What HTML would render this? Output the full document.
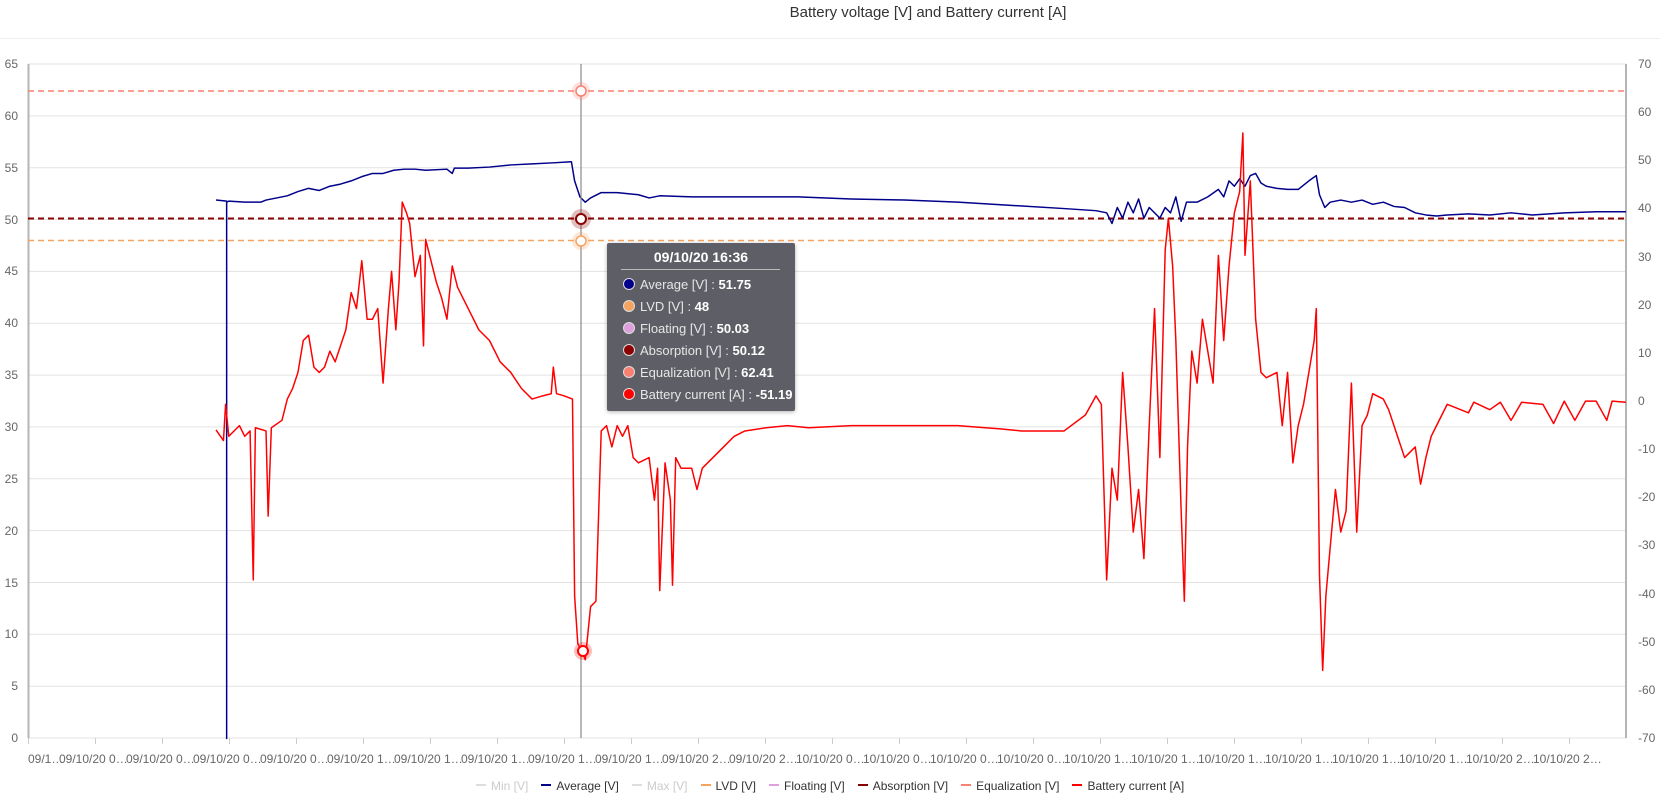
<!DOCTYPE html>
<html><head><meta charset="utf-8">
<style>
html,body{margin:0;padding:0;background:#fff;width:1660px;height:798px;overflow:hidden;font-family:"Liberation Sans",sans-serif;}
.title{position:absolute;top:4px;left:0;width:1856px;text-align:center;font-size:15px;color:#333;}
.hdr{position:absolute;top:38px;left:0;width:1660px;height:1px;background:#eee;}
.tt{position:absolute;left:607px;top:243px;width:188px;height:168px;background:rgba(80,81,89,0.92);border-radius:2px;box-shadow:0 1px 4px rgba(0,0,0,.3);color:#fff;font-size:13px;}
.tt .h{text-align:center;font-weight:bold;font-size:14px;margin-top:6px;}
.tt .ln{margin:4px 15px 0 14px;height:1px;background:#bbb;}
.tt .r{position:absolute;left:16px;white-space:nowrap;color:#e6e6e6;}
.tt .r b{color:#fff;}
.tt .d{display:inline-block;width:10px;height:10px;border-radius:50%;border:1px solid #ddd;margin-right:5px;vertical-align:-1px;}
.leg{position:absolute;top:779px;left:476px;font-size:12px;color:#333;white-space:nowrap;}
.leg span{margin-right:13px;}
.leg i{display:inline-block;width:10px;height:2px;vertical-align:4px;margin-right:5px;}
</style></head><body>
<div class="title">Battery voltage [V] and Battery current [A]</div>
<div class="hdr"></div>
<svg width="1660" height="798" style="position:absolute;left:0;top:0" xmlns="http://www.w3.org/2000/svg" font-family="Liberation Sans, sans-serif">
<g stroke="#e3e3e3" stroke-width="1">
<line x1="28" x2="1626" y1="64" y2="64"/><line x1="28" x2="1626" y1="115.85" y2="115.85"/><line x1="28" x2="1626" y1="167.7" y2="167.7"/><line x1="28" x2="1626" y1="219.5" y2="219.5"/><line x1="28" x2="1626" y1="271.4" y2="271.4"/><line x1="28" x2="1626" y1="323.2" y2="323.2"/><line x1="28" x2="1626" y1="375.1" y2="375.1"/><line x1="28" x2="1626" y1="426.9" y2="426.9"/><line x1="28" x2="1626" y1="478.8" y2="478.8"/><line x1="28" x2="1626" y1="530.6" y2="530.6"/><line x1="28" x2="1626" y1="582.5" y2="582.5"/><line x1="28" x2="1626" y1="634.3" y2="634.3"/><line x1="28" x2="1626" y1="686.2" y2="686.2"/><line x1="28" x2="1626" y1="738" y2="738"/>
</g>
<line x1="28.5" x2="28.5" y1="64" y2="738" stroke="#b5b5b5" stroke-width="2"/>
<line x1="1626" x2="1626" y1="64" y2="738" stroke="#b5b5b5" stroke-width="2"/>
<g font-size="12" fill="#666" text-anchor="end">
<text x="18" y="68">65</text><text x="18" y="120">60</text><text x="18" y="172">55</text><text x="18" y="224">50</text><text x="18" y="275">45</text><text x="18" y="327">40</text><text x="18" y="379">35</text><text x="18" y="431">30</text><text x="18" y="483">25</text><text x="18" y="535">20</text><text x="18" y="587">15</text><text x="18" y="638">10</text><text x="18" y="690">5</text><text x="18" y="742">0</text>
</g>
<g font-size="12" fill="#666">
<text x="1638" y="68">70</text><text x="1638" y="116">60</text><text x="1638" y="164">50</text><text x="1638" y="212">40</text><text x="1638" y="261">30</text><text x="1638" y="309">20</text><text x="1638" y="357">10</text><text x="1638" y="405">0</text><text x="1638" y="453">-10</text><text x="1638" y="501">-20</text><text x="1638" y="549">-30</text><text x="1638" y="598">-40</text><text x="1638" y="646">-50</text><text x="1638" y="694">-60</text><text x="1638" y="742">-70</text>
</g>
<line x1="28" x2="1626" y1="91" y2="91" stroke="#fa8072" stroke-width="1.5" stroke-dasharray="6,4"/>
<line x1="28" x2="1626" y1="218.5" y2="218.5" stroke="#8b0000" stroke-width="2" stroke-dasharray="6,4"/>
<line x1="28" x2="1626" y1="240.5" y2="240.5" stroke="#f4a460" stroke-width="1.5" stroke-dasharray="6,4"/>
<g transform="scale(1.0641)" fill="none" stroke-linejoin="round">
<polyline stroke="#00008b" stroke-width="1.4" points="203,188 213,189 213,694 213,190 215,189 230,190 245,190 250,188 260,186 270,184 280,180 290,177 300,179 310,175 320,173 330,170 340,166 350,163 360,163 370,160 380,159 390,159 400,160 420,159 425,163 427,158 440,158 460,157 480,155 500,154 520,153 537,152 540,170 545,185 550,190 555,186 565,181 580,181 600,183 610,186 620,184 650,185 700,185 750,185 800,187 850,188 900,190 950,193 1000,196 1030,198 1040,200 1045,210 1050,195 1055,205 1060,190 1065,200 1070,187 1075,205 1080,195 1090,205 1095,195 1100,200 1105,185 1110,208 1115,190 1125,190 1135,185 1145,178 1150,185 1155,170 1160,175 1165,168 1170,175 1175,165 1180,163 1185,172 1190,175 1200,177 1210,178 1220,178 1230,170 1237,165 1240,183 1245,195 1250,190 1260,188 1270,190 1280,188 1290,192 1300,190 1310,194 1320,195 1330,200 1340,202 1350,203 1360,202 1380,201 1400,202 1420,200 1440,202 1470,200 1500,199 1528,199"/>
<polyline stroke="#ff0000" stroke-width="1.4" points="203,404 210,414 212,380 215,410 225,400 230,410 235,405 238,545 240,402 250,405 252,485 255,402 265,395 270,375 275,365 280,350 285,320 290,315 295,345 300,350 305,345 310,330 315,340 325,310 330,275 335,290 340,245 345,300 350,300 355,290 360,360 365,290 368,255 372,310 375,265 378,190 382,200 385,210 390,260 395,240 398,325 400,225 405,245 410,265 415,280 420,300 425,250 430,270 440,290 450,310 460,320 470,340 480,350 490,365 500,375 510,372 518,370 520,345 523,370 530,372 538,375 540,560 543,605 547,612 550,620 555,570 560,565 565,405 570,400 575,420 580,400 585,410 590,400 595,430 600,435 610,430 615,470 618,440 620,555 625,435 630,470 632,550 635,430 640,440 650,440 655,460 660,440 670,430 680,420 690,410 700,405 720,402 740,400 760,402 800,400 850,400 900,400 940,403 960,405 1000,405 1020,390 1030,372 1035,380 1040,545 1045,440 1050,470 1055,350 1060,420 1065,500 1070,460 1075,525 1080,400 1085,290 1090,430 1095,235 1098,205 1102,250 1105,320 1110,480 1113,565 1116,420 1120,330 1125,360 1130,300 1140,360 1145,240 1150,320 1155,250 1160,200 1165,180 1168,125 1170,240 1175,170 1180,300 1185,350 1190,355 1200,350 1205,400 1210,350 1215,435 1220,400 1225,380 1230,350 1235,320 1237,290 1240,540 1243,630 1246,560 1250,515 1255,460 1260,500 1265,480 1270,360 1275,500 1280,400 1285,390 1290,370 1300,375 1305,385 1310,400 1320,430 1330,420 1335,455 1340,430 1345,410 1350,400 1360,380 1380,388 1385,378 1400,385 1410,378 1420,395 1430,378 1450,380 1460,398 1470,377 1480,395 1490,377 1500,377 1510,395 1515,377 1528,378"/>
</g>
<line x1="581" x2="581" y1="64" y2="738" stroke="#888" stroke-width="1.2"/>
<circle cx="581" cy="91" r="9" fill="#fa8072" opacity="0.25"/><circle cx="581" cy="91" r="5" fill="#fff" stroke="#fa8072" stroke-width="1.5"/>
<circle cx="581" cy="219" r="10" fill="#8b0000" opacity="0.25"/><circle cx="581" cy="219" r="5" fill="#fff" stroke="#8b0000" stroke-width="2"/>
<circle cx="581" cy="241" r="9" fill="#f4a460" opacity="0.25"/><circle cx="581" cy="241" r="5" fill="#fff" stroke="#f4a460" stroke-width="1.5"/>
<circle cx="583" cy="651" r="9" fill="#ff0000" opacity="0.25"/><circle cx="583" cy="651" r="5" fill="#fff" stroke="#ff0000" stroke-width="2"/>
</svg>
<div class="tt">
<div class="h">09/10/20 16:36</div><div class="ln"></div>
<div class="r" style="top:34px"><span class="d" style="background:#00008b"></span>Average [V] : <b>51.75</b></div>
<div class="r" style="top:56px"><span class="d" style="background:#f4a460"></span>LVD [V] : <b>48</b></div>
<div class="r" style="top:78px"><span class="d" style="background:#dda0dd"></span>Floating [V] : <b>50.03</b></div>
<div class="r" style="top:100px"><span class="d" style="background:#8b0000"></span>Absorption [V] : <b>50.12</b></div>
<div class="r" style="top:122px"><span class="d" style="background:#fa8072"></span>Equalization [V] : <b>62.41</b></div>
<div class="r" style="top:144px"><span class="d" style="background:#ff0000"></span>Battery current [A] : <b>-51.19</b></div>
</div>
<div class="leg">
<span style="color:#ccc"><i style="background:#ddd"></i>Min [V]</span><span><i style="background:#00008b"></i>Average [V]</span><span style="color:#ccc"><i style="background:#ddd"></i>Max [V]</span><span><i style="background:#f4a460"></i>LVD [V]</span><span><i style="background:#dda0dd"></i>Floating [V]</span><span><i style="background:#8b0000"></i>Absorption [V]</span><span><i style="background:#fa8072"></i>Equalization [V]</span><span><i style="background:#ff0000"></i>Battery current [A]</span>
</div>
<div style="position:absolute;top:752px;left:28px;height:16px;width:1600px;font-size:12px;color:#666;white-space:nowrap;overflow:hidden">
<span style="position:absolute;left:0">09/1…</span>
<span style="position:absolute;left:31px">09/10/20 0…</span><span style="position:absolute;left:98px">09/10/20 0…</span><span style="position:absolute;left:165px">09/10/20 0…</span><span style="position:absolute;left:232px">09/10/20 0…</span><span style="position:absolute;left:299px">09/10/20 1…</span><span style="position:absolute;left:366px">09/10/20 1…</span><span style="position:absolute;left:433px">09/10/20 1…</span><span style="position:absolute;left:500px">09/10/20 1…</span><span style="position:absolute;left:567px">09/10/20 1…</span><span style="position:absolute;left:634px">09/10/20 2…</span><span style="position:absolute;left:701px">09/10/20 2…</span><span style="position:absolute;left:768px">10/10/20 0…</span><span style="position:absolute;left:835px">10/10/20 0…</span><span style="position:absolute;left:902px">10/10/20 0…</span><span style="position:absolute;left:969px">10/10/20 0…</span><span style="position:absolute;left:1036px">10/10/20 1…</span><span style="position:absolute;left:1103px">10/10/20 1…</span><span style="position:absolute;left:1170px">10/10/20 1…</span><span style="position:absolute;left:1237px">10/10/20 1…</span><span style="position:absolute;left:1304px">10/10/20 1…</span><span style="position:absolute;left:1371px">10/10/20 1…</span><span style="position:absolute;left:1438px">10/10/20 2…</span><span style="position:absolute;left:1505px">10/10/20 2…</span>
</div>
<svg width="1660" height="20" style="position:absolute;left:0;top:738px">
<g stroke="#ccc" stroke-width="1">
<line x1="28.5" x2="28.5" y1="0" y2="6"/><line x1="95.5" x2="95.5" y1="0" y2="6"/><line x1="162.5" x2="162.5" y1="0" y2="6"/><line x1="229.5" x2="229.5" y1="0" y2="6"/><line x1="296.5" x2="296.5" y1="0" y2="6"/><line x1="363.5" x2="363.5" y1="0" y2="6"/><line x1="430.5" x2="430.5" y1="0" y2="6"/><line x1="497.5" x2="497.5" y1="0" y2="6"/><line x1="564.5" x2="564.5" y1="0" y2="6"/><line x1="631.5" x2="631.5" y1="0" y2="6"/><line x1="698.5" x2="698.5" y1="0" y2="6"/><line x1="765.5" x2="765.5" y1="0" y2="6"/><line x1="832.5" x2="832.5" y1="0" y2="6"/><line x1="899.5" x2="899.5" y1="0" y2="6"/><line x1="966.5" x2="966.5" y1="0" y2="6"/><line x1="1033.5" x2="1033.5" y1="0" y2="6"/><line x1="1100.5" x2="1100.5" y1="0" y2="6"/><line x1="1167.5" x2="1167.5" y1="0" y2="6"/><line x1="1234.5" x2="1234.5" y1="0" y2="6"/><line x1="1301.5" x2="1301.5" y1="0" y2="6"/><line x1="1368.5" x2="1368.5" y1="0" y2="6"/><line x1="1435.5" x2="1435.5" y1="0" y2="6"/><line x1="1502.5" x2="1502.5" y1="0" y2="6"/><line x1="1569.5" x2="1569.5" y1="0" y2="6"/>
</g></svg>
</body></html>
